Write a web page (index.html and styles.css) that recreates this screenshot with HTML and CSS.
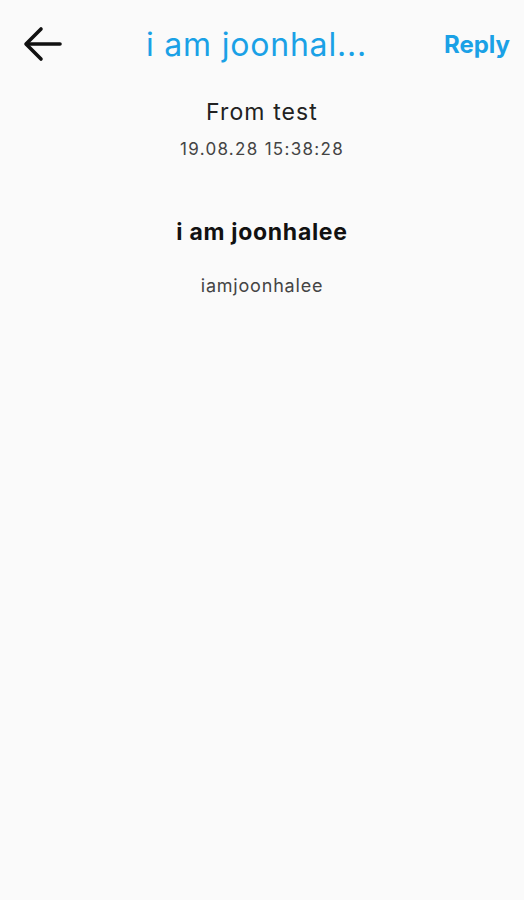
FILE: index.html
```html
<!DOCTYPE html>
<html lang="en">
<head>
  <meta charset="UTF-8">
  <meta name="viewport" content="width=device-width, initial-scale=1.0">
  <title>Message</title>
  <link rel="stylesheet" href="styles.css">
</head>
<body>
  <div class="header">
    <a class="back" href="#">
      <svg width="40" height="36" viewBox="0 0 40 36" fill="none" stroke="#111" stroke-width="3.6" stroke-linecap="round" stroke-linejoin="round">
        <path d="M37 18H4"/>
        <path d="M18 3L3 18l15 15"/>
      </svg>
    </a>
    <div class="title">i am joonhal...</div>
    <a class="reply" href="#">Reply</a>
  </div>

  <div class="message">
    <div class="from">From test</div>
    <div class="date">19.08.28 15:38:28</div>
    <div class="subject">i am joonhalee</div>
    <div class="body">iamjoonhalee</div>
  </div>
</body>
</html>
```

FILE: styles.css
```css
html, body {
  margin: 0;
  padding: 0;
  background: #fafafa;
  font-family: 'Inter', 'Roboto', sans-serif;
  color: #222;
}
.header {
  display: flex;
  align-items: center;
  height: 88px;
  padding: 0 14px 0 23px;
}
.back {
  display: flex;
}
.title {
  flex: 1;
  text-align: center;
  color: #1aa1e6;
  font-size: 32px;
  letter-spacing: 0.8px;
  margin: 0 0 0 6px;
}
.reply {
  color: #1aa1e6;
  font-size: 24px;
  font-weight: 700;
  text-decoration: none;
}
.message {
  display: flex;
  flex-direction: column;
  align-items: center;
  text-align: center;
}
.from {
  font-size: 23px;
  letter-spacing: 1.1px;
  margin-top: 10px;
  color: #222;
}
.date {
  font-size: 17px;
  letter-spacing: 1.3px;
  color: #444;
  margin-top: 13px;
}
.subject {
  font-size: 23px;
  font-weight: 700;
  letter-spacing: 0.7px;
  color: #111;
  margin-top: 59px;
}
.body {
  font-size: 18px;
  letter-spacing: 0.8px;
  color: #444;
  margin-top: 29px;
}
```
